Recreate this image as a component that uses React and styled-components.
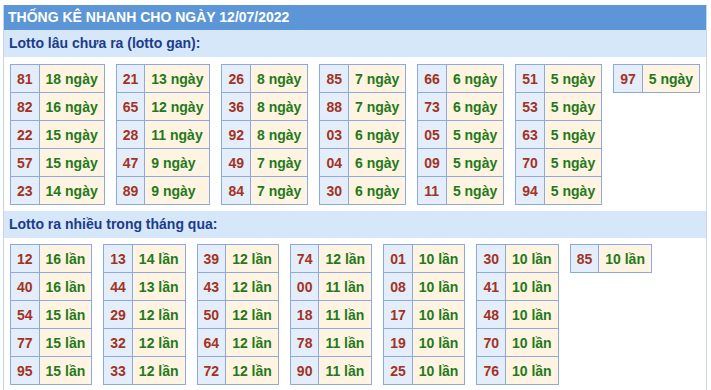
import React from "react";
import styled, { createGlobalStyle } from "styled-components";

const Global = createGlobalStyle`
  html, body { margin: 0; padding: 0; background: #ffffff; }
  body { font-family: "Liberation Sans", Arial, sans-serif; }
`;

const Panel = styled.div`
  margin: 5px 4px 0 3px;
  width: 704px;
  height: 385px;
  box-sizing: border-box;
  border-left: 1px solid #c9d3e6;
  border-right: 1px solid #c9d3e6;
  overflow: hidden;
`;

const Title = styled.div`
  height: 25px;
  background: #5d96d6;
  color: #ffffff;
  font-weight: bold;
  font-size: 14px;
  line-height: 25px;
  padding-left: 5px;
  margin-left: -1px;
  margin-right: -1px;
`;

const SubTitle = styled.div`
  height: 27px;
  background: #d6e7f9;
  color: #1b3c8c;
  font-weight: bold;
  font-size: 14px;
  line-height: 27px;
  padding-left: 5px;
`;

const Group = styled.div`
  display: flex;
  align-items: flex-start;
  gap: 11px;
  padding: ${(p) => p.$top}px 0 ${(p) => p.$bottom}px 6px;
`;

const Table = styled.table`
  border-collapse: collapse;
  font-size: 14px;
  font-weight: bold;
`;

const Cell = styled.td`
  height: 27px;
  padding: 0 6px;
  border: 1px solid #8ea9dc;
  white-space: nowrap;
  text-align: left;
  background: ${(p) => (p.$num ? "#e4eefb" : "#fff3e1")};
  color: ${(p) => (p.$num ? "#a3331f" : "#1f7a1c")};
`;

const gan = [
  [["81", 18], ["82", 16], ["22", 15], ["57", 15], ["23", 14]],
  [["21", 13], ["65", 12], ["28", 11], ["47", 9], ["89", 9]],
  [["26", 8], ["36", 8], ["92", 8], ["49", 7], ["84", 7]],
  [["85", 7], ["88", 7], ["03", 6], ["04", 6], ["30", 6]],
  [["66", 6], ["73", 6], ["05", 5], ["09", 5], ["11", 5]],
  [["51", 5], ["53", 5], ["63", 5], ["70", 5], ["94", 5]],
  [["97", 5]],
];

const nhieu = [
  [["12", 16], ["40", 16], ["54", 15], ["77", 15], ["95", 15]],
  [["13", 14], ["44", 13], ["29", 12], ["32", 12], ["33", 12]],
  [["39", 12], ["43", 12], ["50", 12], ["64", 12], ["72", 12]],
  [["74", 12], ["00", 11], ["18", 11], ["78", 11], ["90", 11]],
  [["01", 10], ["08", 10], ["17", 10], ["19", 10], ["25", 10]],
  [["30", 10], ["41", 10], ["48", 10], ["70", 10], ["76", 10]],
  [["85", 10]],
];

function Block({ cols, unit, top, bottom }) {
  return (
    <Group $top={top} $bottom={bottom}>
      {cols.map((col, i) => (
        <Table key={i}>
          <tbody>
            {col.map(([n, v]) => (
              <tr key={n}>
                <Cell $num>{n}</Cell>
                <Cell>{`${v} ${unit}`}</Cell>
              </tr>
            ))}
          </tbody>
        </Table>
      ))}
    </Group>
  );
}

export default function App() {
  return (
    <>
      <Global />
      <Panel>
        <Title>THỐNG KÊ NHANH CHO NGÀY 12/07/2022</Title>
        <SubTitle>Lotto lâu chưa ra (lotto gan):</SubTitle>
        <Block cols={gan} unit="ngày" top={7} bottom={6} />
        <SubTitle>Lotto ra nhiều trong tháng qua:</SubTitle>
        <Block cols={nhieu} unit="lần" top={6} bottom={0} />
      </Panel>
    </>
  );
}
